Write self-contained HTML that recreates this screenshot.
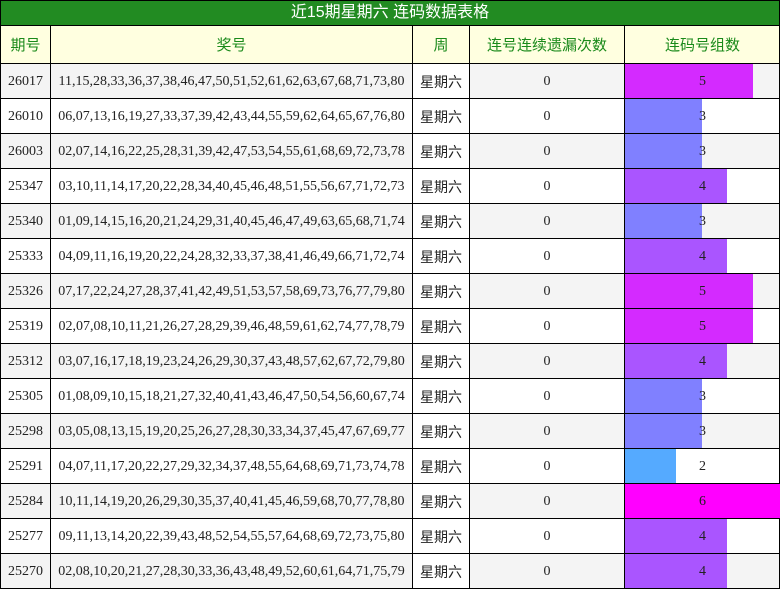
<!DOCTYPE html>
<html><head><meta charset="utf-8"><style>
*{margin:0;padding:0;box-sizing:border-box}
body{width:780px;height:589px;background:#fff;position:relative;overflow:hidden;font-family:"Liberation Serif","Noto Serif CJK SC",serif;font-size:14px;color:#222}
.t{position:absolute;left:0;top:0;width:780px;height:26px;background:#228b22;border:1px solid #000;color:#fff;font-family:"Liberation Sans","Noto Sans CJK SC",sans-serif;font-size:16px;text-align:center;line-height:24px}
.r{position:absolute;left:0;width:780px;height:36px;border:1px solid #000}
.c{position:absolute;top:0;height:100%;display:flex;align-items:center;justify-content:center;border-right:1px solid #000;padding-top:2px}
.h .c{color:#1a8a1a;font-family:"Liberation Sans","Noto Sans CJK SC",sans-serif;font-size:15px;padding-top:0}
.cn{font-family:"Liberation Sans","Noto Sans CJK SC",sans-serif;font-size:14px}
.bar{position:absolute;left:0;top:0;height:100%}
</style></head><body>
<div class="t">近15期星期六 连码数据表格</div>
<div class="r h" style="top:25px;height:39px;background:#ffffe0">
<div class="c" style="left:0;width:50px">期号</div>
<div class="c" style="left:50px;width:362px">奖号</div>
<div class="c" style="left:412px;width:57px">周</div>
<div class="c" style="left:469px;width:155px">连号连续遗漏次数</div>
<div class="c" style="left:624px;width:155px;border-right:none">连码号组数</div>
</div>
<div id="rows"></div>
<script>
var d=[["26017","11,15,28,33,36,37,38,46,47,50,51,52,61,62,63,67,68,71,73,80",5],
["26010","06,07,13,16,19,27,33,37,39,42,43,44,55,59,62,64,65,67,76,80",3],
["26003","02,07,14,16,22,25,28,31,39,42,47,53,54,55,61,68,69,72,73,78",3],
["25347","03,10,11,14,17,20,22,28,34,40,45,46,48,51,55,56,67,71,72,73",4],
["25340","01,09,14,15,16,20,21,24,29,31,40,45,46,47,49,63,65,68,71,74",3],
["25333","04,09,11,16,19,20,22,24,28,32,33,37,38,41,46,49,66,71,72,74",4],
["25326","07,17,22,24,27,28,37,41,42,49,51,53,57,58,69,73,76,77,79,80",5],
["25319","02,07,08,10,11,21,26,27,28,29,39,46,48,59,61,62,74,77,78,79",5],
["25312","03,07,16,17,18,19,23,24,26,29,30,37,43,48,57,62,67,72,79,80",4],
["25305","01,08,09,10,15,18,21,27,32,40,41,43,46,47,50,54,56,60,67,74",3],
["25298","03,05,08,13,15,19,20,25,26,27,28,30,33,34,37,45,47,67,69,77",3],
["25291","04,07,11,17,20,22,27,29,32,34,37,48,55,64,68,69,71,73,74,78",2],
["25284","10,11,14,19,20,26,29,30,35,37,40,41,45,46,59,68,70,77,78,80",6],
["25277","09,11,13,14,20,22,39,43,48,52,54,55,57,64,68,69,72,73,75,80",4],
["25270","02,08,10,20,21,27,28,30,33,36,43,48,49,52,60,61,64,71,75,79",4]];
var col={2:"#55aaff",3:"#8080ff",4:"#aa55ff",5:"#d42aff",6:"#ff00ff"};
var h="";
d.forEach(function(x,i){var bg=i%2==0?"#f4f4f4":"#fff";var w=x[2]==6?155:Math.round(x[2]/6*153);
h+='<div class="r" style="top:'+(63+i*35)+'px;background:'+bg+'">'+
'<div class="c" style="left:0;width:50px">'+x[0]+'</div>'+
'<div class="c" style="left:50px;width:362px">'+x[1]+'</div>'+
'<div class="c cn" style="left:412px;width:57px;background:#fff">星期六</div>'+
'<div class="c" style="left:469px;width:155px">0</div>'+
'<div class="c" style="left:624px;width:155px;border-right:none"><div class="bar" style="width:'+w+'px;background:'+col[x[2]]+'"></div><span style="position:relative">'+x[2]+'</span></div></div>';});
document.getElementById("rows").innerHTML=h;
</script>
</body></html>
